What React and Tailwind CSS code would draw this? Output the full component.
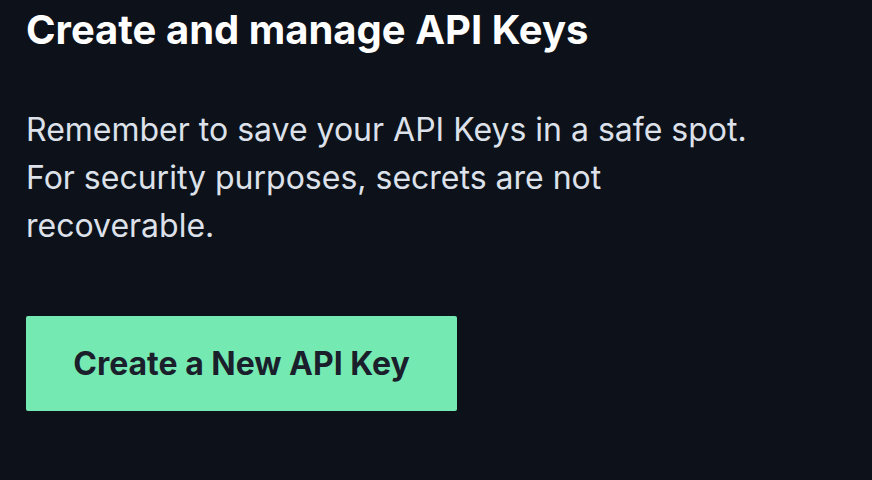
export default function App() {
  return (
    <div className="min-h-[480px] w-full bg-[#0d111a] px-[26px] pt-[6px] font-['Inter','Liberation_Sans',sans-serif]">
      <h1 className="text-[40px] font-bold leading-[48px] text-white">
        Create and manage API Keys
      </h1>

      <p className="mt-[52px] max-w-[760px] text-[32px] leading-[48px] text-[#dde1ea]">
        Remember to save your API Keys in a safe spot. For security purposes,
        secrets are not recoverable.
      </p>

      <button className="mt-[66px] flex h-[95px] w-[431px] items-center justify-center rounded-[2px] bg-[#75e9b2] text-[32px] font-bold text-[#1a1f2b]">
        Create a New API Key
      </button>
    </div>
  );
}
